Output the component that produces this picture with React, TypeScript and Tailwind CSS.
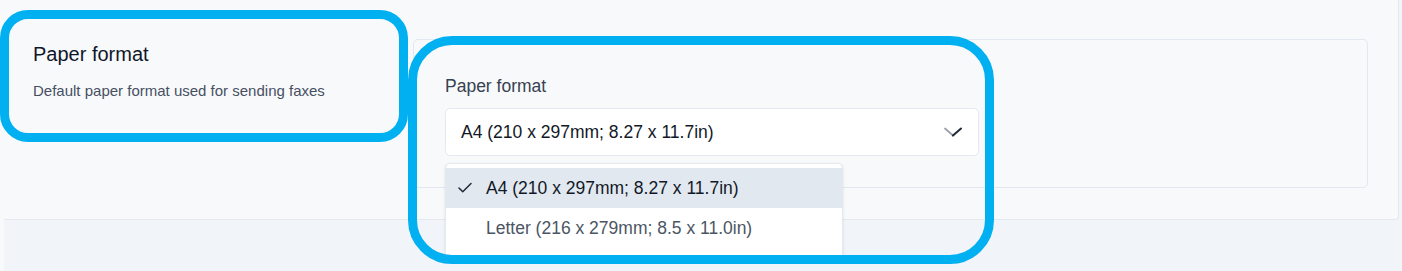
import { Check } from 'lucide-react';

const FONT = { fontFamily: '"Liberation Sans", Arial, sans-serif' };

const options = [
  { id: 'a4', label: 'A4 (210 x 297mm; 8.27 x 11.7in)' },
  { id: 'letter', label: 'Letter (216 x 279mm; 8.5 x 11.0in)' },
];

function Chevron() {
  return (
    <svg width="18" height="10" viewBox="0 0 18 10" fill="none">
      <line x1="1" y1="1.5" x2="9" y2="8.5" stroke="#9aa1ad" strokeWidth="1.8" strokeLinecap="round" />
      <line x1="9" y1="8.5" x2="17" y2="1.5" stroke="#1f2937" strokeWidth="2" strokeLinecap="round" />
    </svg>
  );
}

export default function App() {
  const selected = 'a4';

  return (
    <div className="relative flex h-[271px] w-[1402px] overflow-hidden bg-[#f8f9fb]" style={FONT}>
      <div className="w-[4px] shrink-0" />
      <main className="flex-1 bg-[#f1f4f8]">
        {/* settings card */}
        <section className="flex w-[1395px] rounded-br-[4px] border-r border-b border-[#e4e9f0] bg-[#f8f9fb] pt-[39px] pr-[30px] pb-[31px]">
          <div className="w-[409px] shrink-0 pl-[29px] pt-px">
            <h2 className="text-[20px] leading-[28px] text-[#0f172a]">Paper format</h2>
            <p className="mt-[13px] text-[15px] leading-[20px] text-[#475063]">
              Default paper format used for sending faxes
            </p>
          </div>

          <div className="h-[149px] flex-1 rounded-[5px] border border-[#e2e8f0] px-[31px] pt-[34px]">
            <label className="block text-[17.5px] leading-[24px] text-[#374151]">Paper format</label>
            <div className="relative mt-[10px] w-[534px]">
              <button className="flex h-[48px] w-full items-center justify-between rounded-[5px] border border-[#e5e9f0] bg-white pl-[15px] pr-[16px] text-left text-[17.5px] font-medium text-[#111827]">
                <span>{options[0].label}</span>
                <Chevron />
              </button>

              {/* open listbox */}
              <ul className="absolute left-0 top-[55px] z-10 w-[398px] rounded-[5px] border border-[#e5e9f0] bg-white pt-[4px] pb-[10px] shadow-sm">
                {options.map((opt) => (
                  <li
                    key={opt.id}
                    className={`flex h-[40px] items-center text-[17.5px] ${
                      opt.id === selected
                        ? 'bg-[#e2e8f0] pl-[10px] text-[#111827]'
                        : 'pl-[40px] text-[#4b5563]'
                    }`}
                  >
                    {opt.id === selected ? (
                      <Check className="mr-[12px] h-[18px] w-[18px] text-[#1f2937]" strokeWidth={2} />
                    ) : null}
                    <span>{opt.label}</span>
                  </li>
                ))}
              </ul>
            </div>
          </div>
        </section>
      </main>

      {/* highlight annotations */}
      <div className="pointer-events-none absolute left-0 top-[10px] h-[132px] w-[408px] rounded-[28px] border-[9px] border-[#00b0f0]" />
      <div className="pointer-events-none absolute left-[408px] top-[36px] z-20 h-[228px] w-[586px] rounded-[44px] border-[9px] border-[#00b0f0]" />
    </div>
  );
}
